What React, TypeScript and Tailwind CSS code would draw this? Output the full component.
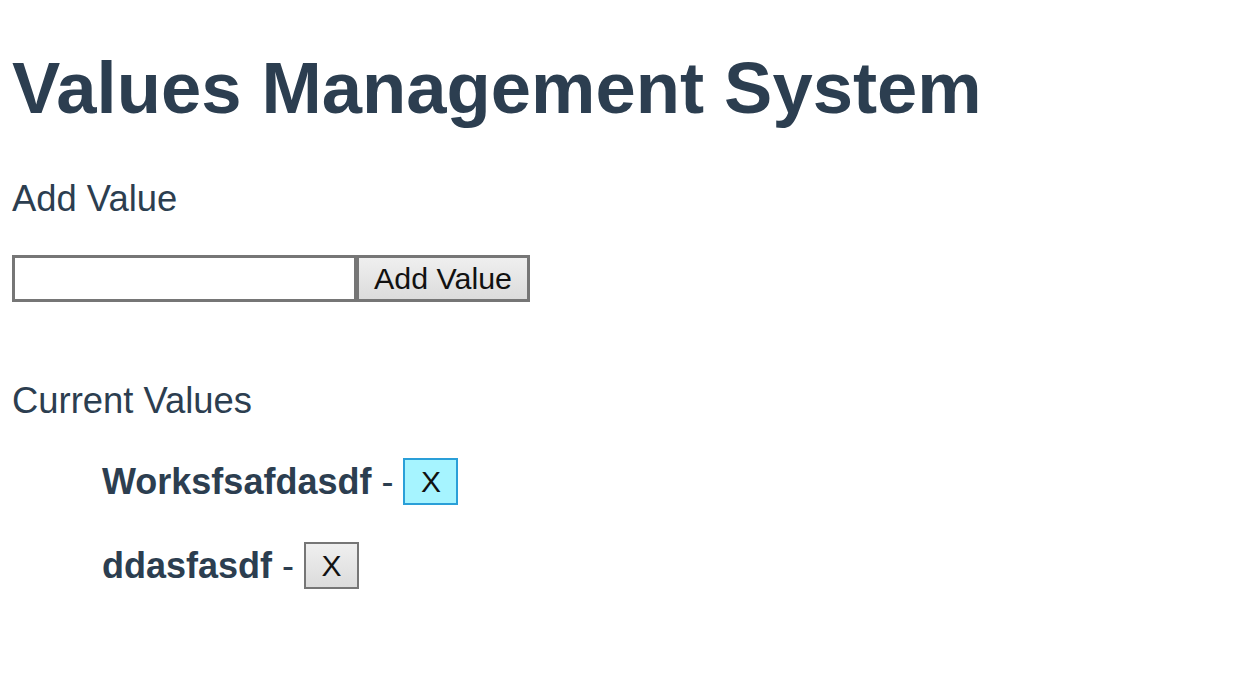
import { useState } from "react";

// 값 목록 관리 화면
export default function App() {
  const [values, setValues] = useState<string[]>(["Worksfsafdasdf", "ddasfasdf"]);
  const [draft, setDraft] = useState("");

  const addValue = () => {
    if (!draft.trim()) return;
    setValues([...values, draft.trim()]);
    setDraft("");
  };

  const removeValue = (idx: number) => {
    setValues(values.filter((_, i) => i !== idx));
  };

  return (
    <div className="min-h-screen bg-white px-[12px] text-[#2c3e50] [font-family:'Liberation_Sans',Arial,sans-serif]">
      <h1 className="pt-[52px] text-[72.4px] font-bold leading-none">Values Management System</h1>

      <h2 className="mt-[57px] text-[36.4px] font-normal leading-none">Add Value</h2>

      <div className="mt-[37px] flex">
        <input
          value={draft}
          onChange={(e) => setDraft(e.target.value)}
          className="h-[47px] w-[345px] border-[3px] border-[#767676] bg-white px-1 text-[30px] outline-none"
        />
        <button
          onClick={addValue}
          className="h-[47px] w-[173px] border-[3px] border-l-2 border-[#767676] bg-gradient-to-b from-[#efefef] to-[#dcdcdc] text-[30.4px] leading-none text-[#111]"
        >
          Add Value
        </button>
      </div>

      <h2 className="mt-[81px] text-[36.4px] font-normal leading-none">Current Values</h2>

      {/* 목록 */}
      <ul className="pl-[90px]">
        {values.map((v, i) => (
          <li key={v + i} className={"flex h-[47px] items-center text-[36px] leading-none " + (i === 0 ? "mt-[39px]" : "mt-[37px]")}>
            <strong className="font-bold">{v}</strong>
            <span className="whitespace-pre"> - </span>
            <button
              onClick={() => removeValue(i)}
              className={
                i === 0
                  ? "h-[47px] w-[55px] border-2 border-[#2a9fd8] bg-[#a6f4ff] text-[30px] leading-none text-[#111]"
                  : "h-[47px] w-[55px] border-2 border-[#767676] bg-gradient-to-b from-[#efefef] to-[#dcdcdc] text-[30px] leading-none text-[#111]"
              }
            >
              X
            </button>
          </li>
        ))}
      </ul>
    </div>
  );
}
